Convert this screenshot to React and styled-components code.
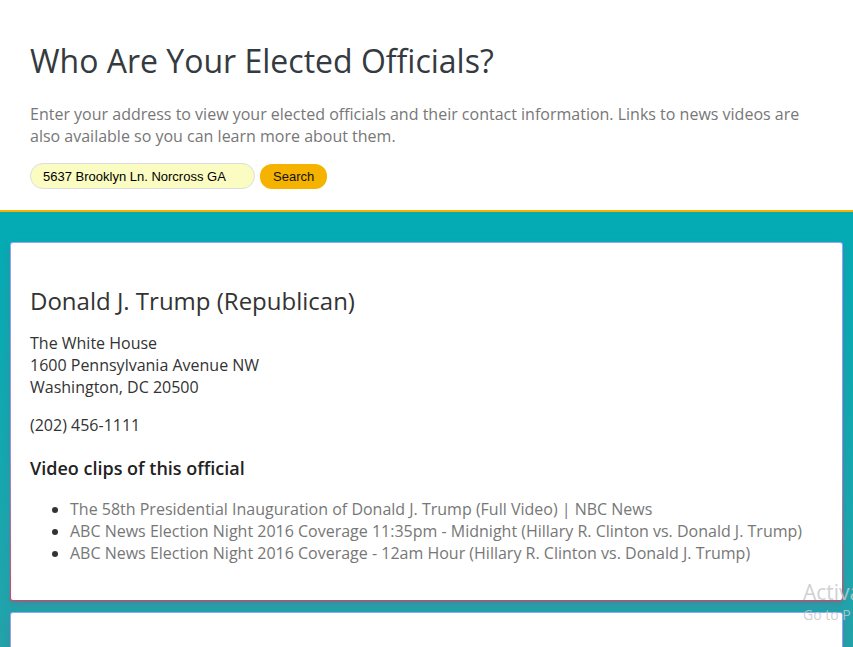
import React from 'react';
import styled, { createGlobalStyle } from 'styled-components';

const GlobalStyle = createGlobalStyle`
  body {
    margin: 0;
    font-family: "Open Sans", "Liberation Sans", sans-serif;
    background: #ffffff;
  }
`;

const Page = styled.div`
  width: 853px;
  height: 647px;
  overflow: hidden;
  position: relative;
`;

const Header = styled.header`
  padding: 40px 30px 21px;
  border-bottom: 2px solid #f5b300;
`;

const Title = styled.h1`
  margin: 0 0 21px;
  font-size: 32px;
  font-weight: 400;
  line-height: 42px;
  color: #343a40;
`;

const Intro = styled.p`
  margin: 0 0 16px;
  font-size: 16px;
  line-height: 22px;
  color: #777;
`;

const SearchRow = styled.form`
  display: flex;
  gap: 5px;
  align-items: center;
`;

const AddressInput = styled.input`
  box-sizing: border-box;
  width: 225px;
  height: 26px;
  padding: 0 12px;
  border: 1px solid #ddd;
  border-radius: 13px;
  background: #fbfcc1;
  font-family: "Liberation Sans", Arial, sans-serif;
  font-size: 13px;
  color: #000;
  outline: none;
`;

const SearchButton = styled.button`
  height: 25px;
  padding: 0 13px;
  border: none;
  border-radius: 12px;
  background: #f5b300;
  font-family: "Liberation Sans", Arial, sans-serif;
  font-size: 13px;
  color: #111;
`;

const Results = styled.main`
  background: linear-gradient(180deg, #03abb4 0%, #1fa5ac 70%, #2a9ba2 100%);
  padding: 30px 10px 0;
  display: flex;
  flex-direction: column;
  gap: 11px;
  min-height: 500px;
`;

const Card = styled.section`
  border-radius: 3px;
  border: 1px solid transparent;
  background-image: linear-gradient(#fff, #fff), linear-gradient(180deg, #8fa7ff 0%, #a28cd8 60%, #e0405a 100%);
  background-origin: border-box;
  background-clip: padding-box, border-box;
  box-shadow: 0 4px 6px rgba(90, 110, 150, 0.45);
  padding: 41px 19px 36px;
  min-height: ${(p) => (p.$empty ? '60px' : 'auto')};
`;

const Name = styled.h2`
  margin: 0 0 14px;
  font-size: 24px;
  font-weight: 400;
  line-height: 34px;
  color: #333;
`;

const Address = styled.p`
  margin: 0 0 16px;
  font-size: 16px;
  line-height: 22px;
  color: #333;
`;

const SubHeading = styled.h3`
  margin: 20px 0 18px;
  font-size: 18px;
  font-weight: 600;
  line-height: 24px;
  color: #222;
`;

const ClipList = styled.ul`
  margin: 0;
  padding-left: 40px;
  color: #333;
`;

const ClipItem = styled.li`
  font-size: 16px;
  line-height: 22px;
`;

const ClipLink = styled.a`
  color: #777;
  text-decoration: none;
`;

const Watermark = styled.div`
  position: absolute;
  left: 803px;
  top: 578px;
  color: rgba(200, 200, 200, 0.85);
  font-family: "Open Sans", sans-serif;
  white-space: nowrap;
  pointer-events: none;
`;

const WmBig = styled.div`
  font-size: 21px;
  line-height: 28px;
`;

const WmSmall = styled.div`
  font-size: 14px;
  line-height: 18px;
`;

const clips = [
  'The 58th Presidential Inauguration of Donald J. Trump (Full Video) | NBC News',
  'ABC News Election Night 2016 Coverage 11:35pm - Midnight (Hillary R. Clinton vs. Donald J. Trump)',
  'ABC News Election Night 2016 Coverage - 12am Hour (Hillary R. Clinton vs. Donald J. Trump)',
];

export default function App() {
  return (
    <Page>
      <GlobalStyle />
      <Header>
        <Title>Who Are Your Elected Officials?</Title>
        <Intro>
          Enter your address to view your elected officials and their contact information. Links to news videos are
          also available so you can learn more about them.
        </Intro>
        <SearchRow onSubmit={(e) => e.preventDefault()}>
          <AddressInput defaultValue="5637 Brooklyn Ln. Norcross GA" />
          <SearchButton type="submit">Search</SearchButton>
        </SearchRow>
      </Header>
      <Results>
        <Card>
          <Name>Donald J. Trump (Republican)</Name>
          <Address>
            The White House
            <br />
            1600 Pennsylvania Avenue NW
            <br />
            Washington, DC 20500
          </Address>
          <Address>(202) 456-1111</Address>
          <SubHeading>Video clips of this official</SubHeading>
          <ClipList>
            {clips.map((c) => (
              <ClipItem key={c}>
                <ClipLink href="#">{c}</ClipLink>
              </ClipItem>
            ))}
          </ClipList>
        </Card>
        <Card $empty />
      </Results>
      <Watermark>
        <WmBig>Activa</WmBig>
        <WmSmall>Go to P</WmSmall>
      </Watermark>
    </Page>
  );
}
